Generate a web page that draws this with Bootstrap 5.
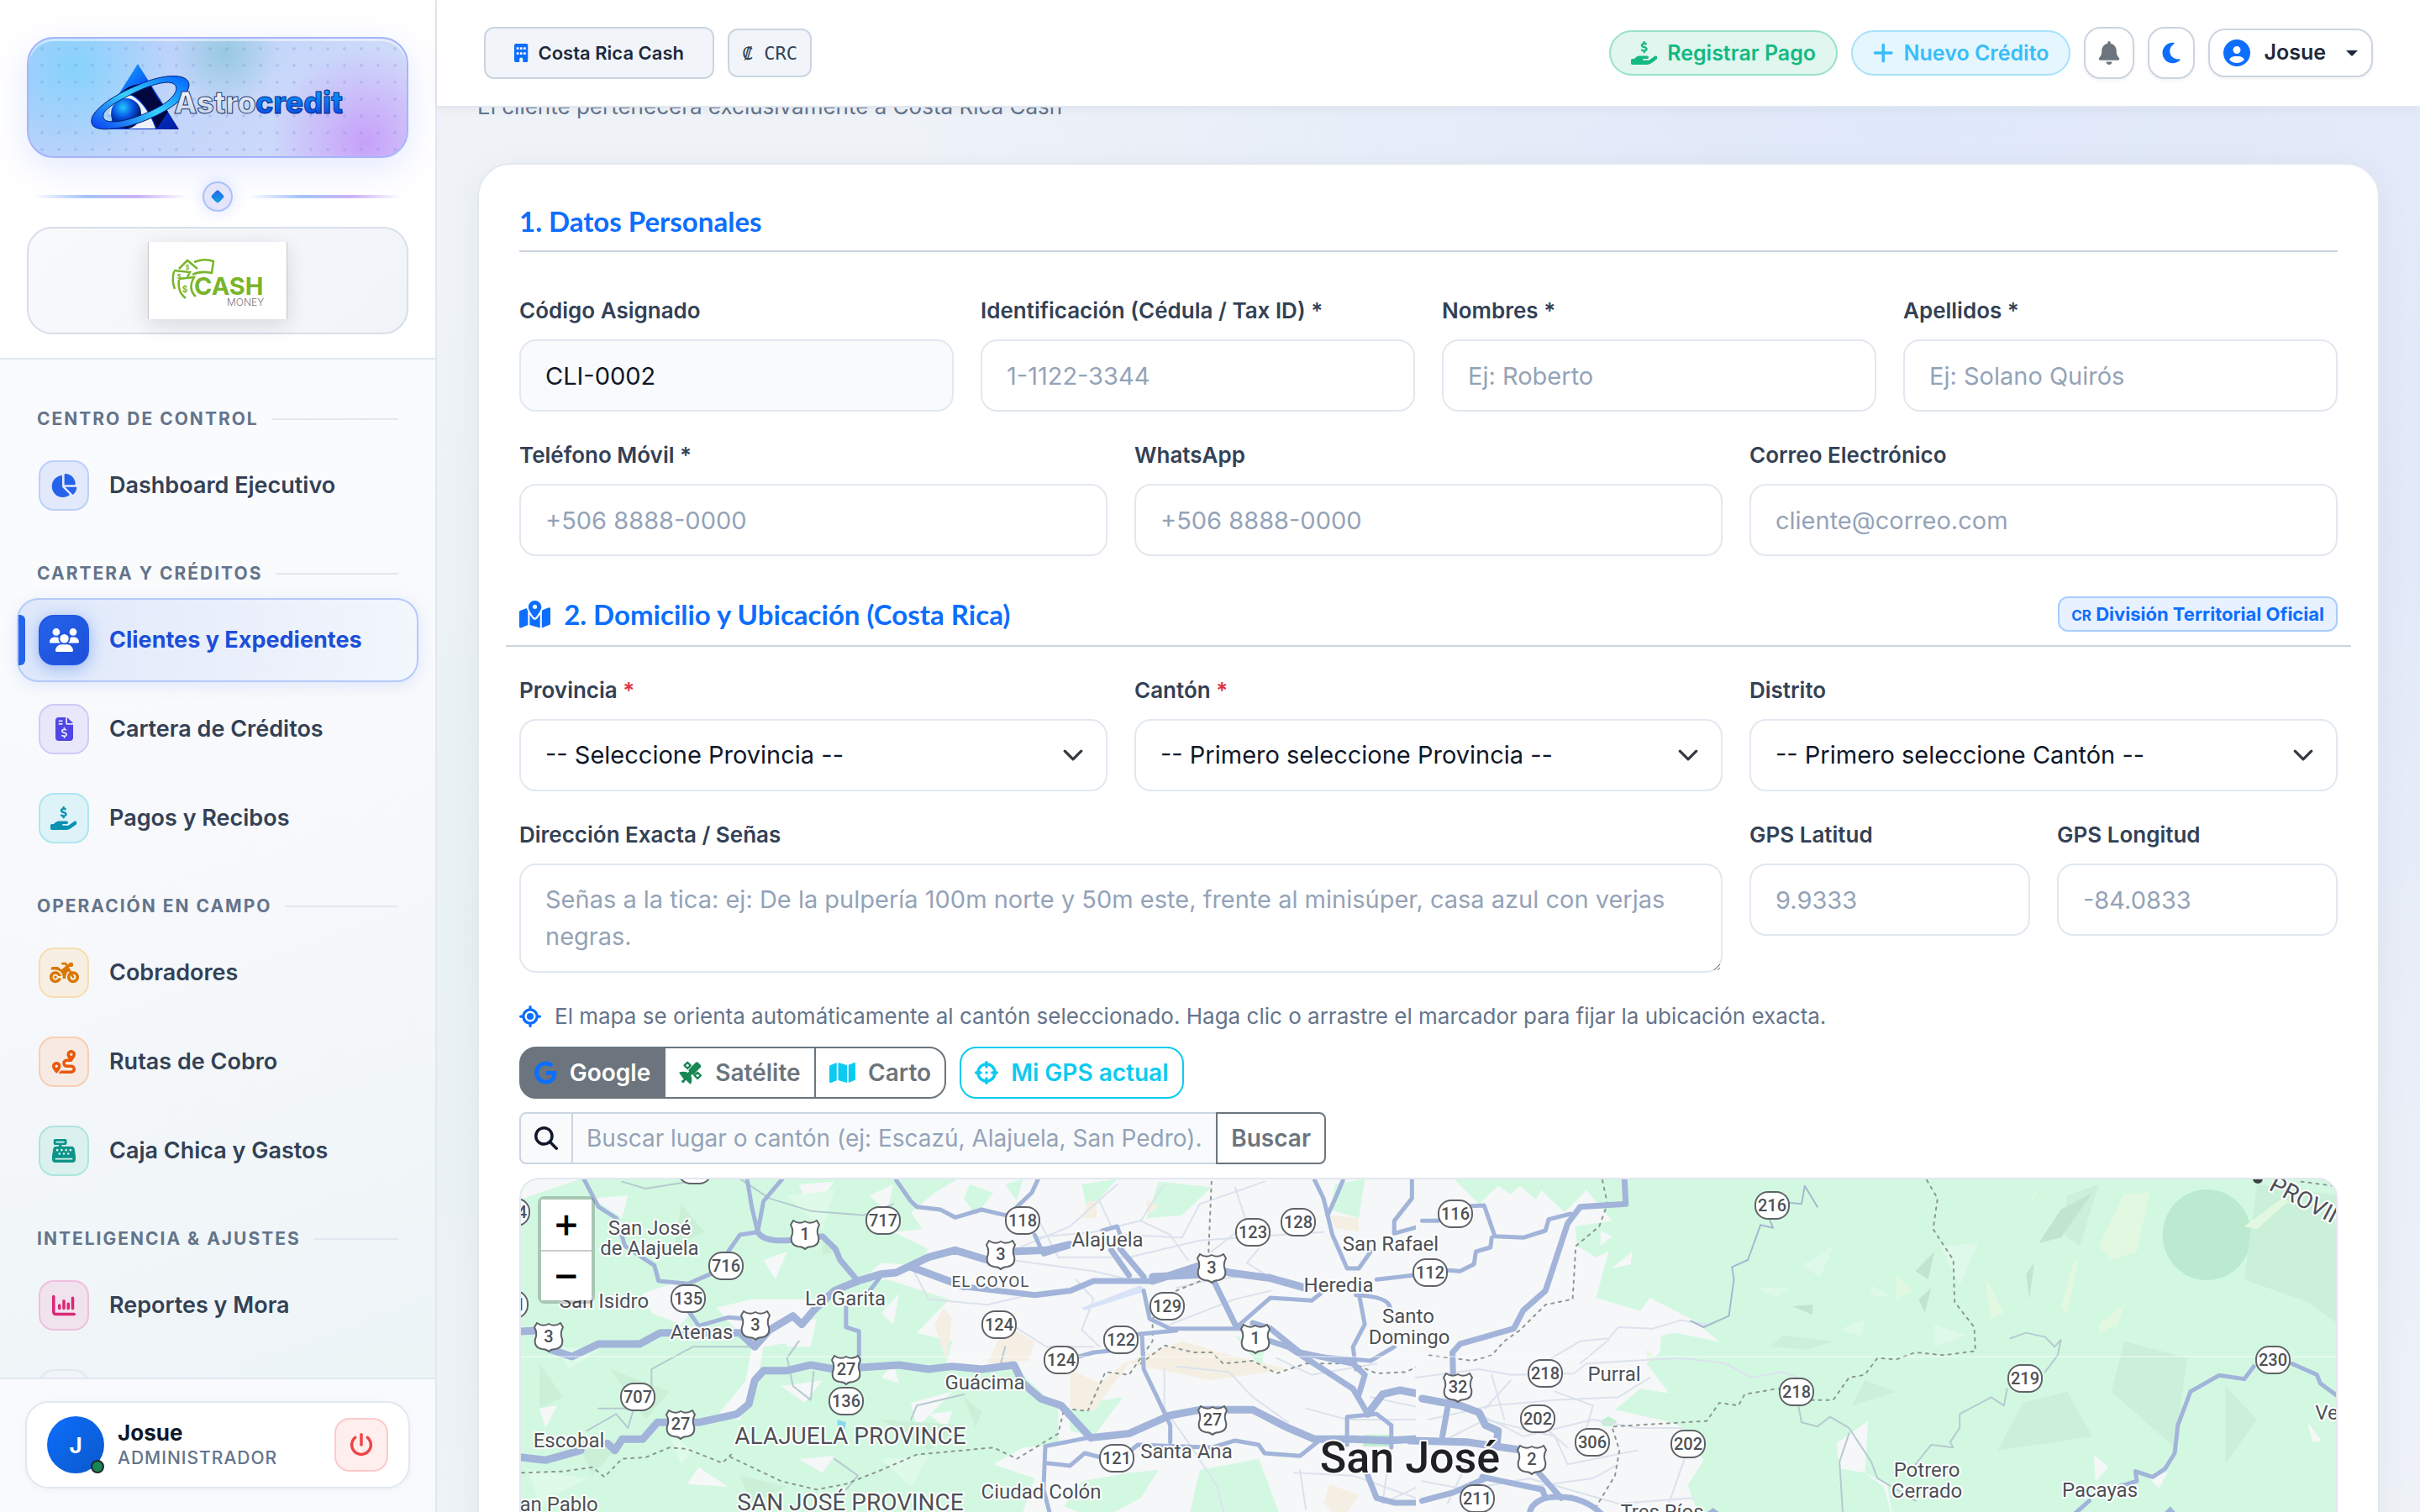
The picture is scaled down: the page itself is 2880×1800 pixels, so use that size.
<!DOCTYPE html>
<html lang="es">
<head>
<meta charset="utf-8">
<meta name="viewport" content="width=device-width, initial-scale=1">
<title>Astrocredit – Nuevo Cliente</title>
<link rel="stylesheet" href="https://cdn.jsdelivr.net/npm/bootstrap@5.3.0/dist/css/bootstrap.min.css">
<style>
:root{--ui:Inter,"Liberation Sans",sans-serif;--line:#e2e8f0;--line-strong:#cbd5e1;--ink:#0f172a;--slate:#334155;--muted:#64748b}
html{font-size:32px}
body{--bs-border-width:2px;font-family:var(--ui);color:var(--ink);background:
 radial-gradient(circle at 78% 0,rgba(219,229,250,.8),transparent 42%),
 radial-gradient(circle at 18% 62%,rgba(228,240,240,.6),transparent 30%),
 radial-gradient(circle at 100% 35%,rgba(226,233,248,.9),transparent 40%),#eff3f8}
.ico{width:1em;height:1em;fill:currentColor;flex:none}
.ico-wide{width:auto;height:1em;fill:currentColor;flex:none;vertical-align:-4px}
/* sidebar */
.side{width:520px;flex:none;border-right:2px solid var(--line);background:linear-gradient(160deg,#f6f9fe 0,#fafbfd 35%,#f6f8fb 60%,#eaf3f5 100%)}
.side-head{padding:44px 32px 28px;background:#fff;border-bottom:2px solid var(--line)}
.brand-box{height:144px;border:2px solid #a5b4fc;border-radius:32px;overflow:hidden;box-shadow:0 12px 40px rgba(99,130,255,.18),inset 0 3px 0 rgba(255,255,255,.5);background:
 radial-gradient(circle,rgba(99,130,220,.22) 2px,transparent 2px) 6px 2px/20px 20px,
 radial-gradient(circle at 12% 25%,rgba(125,211,252,.85),transparent 28%),
 radial-gradient(circle at 52% 12%,rgba(134,196,214,.7),transparent 24%),
 radial-gradient(circle at 89% 88%,rgba(196,150,250,.85),transparent 27%),
 linear-gradient(135deg,#b4cdfb,#c4d6fa 50%,#d8def9)}
.split-row{padding:28px 8px 18px}
.split-line{height:4px;background:linear-gradient(90deg,transparent,#a5c4fb 34%,#ccb3f9 68%,transparent)}
.split-dot{width:36px;height:36px;border:2px solid #a9c2fb;border-radius:50%;background:#e4e4fb;box-shadow:0 0 18px rgba(99,130,255,.25);margin:0 18px}
.split-dot i{width:12px;height:12px;border-radius:3px;transform:rotate(45deg);background:linear-gradient(135deg,#2563eb,#12a5dc)}
.client-box{height:128px;border:2px solid #d8dfe9;border-radius:30px;background:linear-gradient(135deg,#f8f9fc,#f0f4f8)}
.client-logo{width:166px;height:92px;background:#fff;border:solid #c6c6c6;border-width:0 1px;box-shadow:0 6px 24px rgba(15,23,42,.13)}
.client-logo svg{display:block}
.side-nav{overflow:hidden;padding:16px 20px 0}
.nav-cap{padding:42px 24px 16px;line-height:26px;font-size:21px;font-weight:700;letter-spacing:2px;color:var(--muted)}
.nav-cap::after{content:"";flex:1;height:2px;margin-left:16px;background:var(--line)}
.nav-item-x{position:relative;height:100px;margin-bottom:6px;padding:0 24px;gap:24px;border:2px solid transparent;border-radius:26px;color:var(--slate);font-size:27px;font-weight:600;text-decoration:none}
.nav-item-x:has(+.nav-cap){margin-bottom:0}
.tile{width:60px;height:60px;flex:none;border:2px solid;border-radius:18px;font-size:28px}
.t-blue{color:#2563eb;background:#e2e9fb;border-color:#bcd0fb}
.t-violet{color:#4f46e5;background:#e9e8fb;border-color:#cfcbf9}
.t-cyan{color:#0891b2;background:#def3f8;border-color:#aee6f0}
.t-amber{color:#d97706;background:#f7efe1;border-color:#f6deb0}
.t-orange{color:#ea580c;background:#f6eae3;border-color:#f8cfb4}
.t-teal{color:#0d9488;background:#daf1ef;border-color:#ace5de}
.t-pink{color:#db2777;background:#f0e3ee;border-color:#f0bfdd}
.t-gray{color:var(--muted);background:#f0f4f9;border-color:var(--line)}
.nav-item-x.is-on{color:#1d4ed8;font-weight:700;border-color:#b4cafb;background:linear-gradient(90deg,#dfe9fb,#e8eefb 45%,#f2f7fc);box-shadow:0 4px 18px rgba(37,99,235,.12)}
.nav-item-x.is-on::before{content:"";position:absolute;left:0;top:18px;width:8px;height:60px;border-radius:0 6px 6px 0;background:#2563eb}
.is-on .tile{color:#fff;border-color:#2258e2;background:linear-gradient(135deg,#2563eb,#1d4ed8);box-shadow:0 4px 20px rgba(37,99,235,.4)}
.side-foot{height:160px;flex:none;padding:26px 30px;border-top:2px solid var(--line);background:#f8fafd}
.user-box{height:104px;padding:0 24px;border:2px solid var(--line);border-radius:28px;background:#fff;box-shadow:0 2px 8px rgba(15,23,42,.04)}
.avatar-x{position:relative;width:68px;height:68px;border-radius:50%;background:linear-gradient(135deg,#0d6efd,#0a58ca);color:#fff;font-size:26px;font-weight:700}
.avatar-x::after{content:"";position:absolute;right:0;bottom:0;width:16px;height:16px;border:2px solid #212529;border-radius:50%;background:#198754}
.user-name{font-size:26px;line-height:32px;font-weight:700}
.user-role{font-size:21px;line-height:28px;font-weight:500;letter-spacing:1px;color:var(--muted)}
.power{width:64px;height:64px;padding:0;border:2px solid #fbcaca;border-radius:18px;background:#feeeee;color:#ef4444;font-size:28px}
/* top bar */
.page-col{min-width:0}
.topbar{position:relative;z-index:5;height:128px;flex:none;padding:0 56px;border-bottom:2px solid var(--line);background:#fff;box-shadow:0 2px 12px rgba(15,23,42,.05)}
.chip{border:2px solid var(--line-strong);border-radius:12px;background:#f1f5f9;color:var(--slate);font-size:22px;font-weight:600;padding:0}
.chip-co{width:274px;height:62px;gap:12px;color:#1e293b}
.chip-cu{width:100px;height:58px;font:500 22px "DejaVu Sans Mono","Liberation Mono",monospace}
.pill{height:54px;padding:0 24px;gap:12px;border:2px solid;border-radius:27px;font-size:25px;font-weight:600;line-height:50px}
.pill svg{font-size:28px}
.pill-ok{color:#14b981;background:#e0f6ef;border-color:#97e1c6}
.pill-new{color:#38bdf8;background:#e5f6fe;border-color:#a8e1fb}
.sq{height:62px;width:60px;padding:0;border:2px solid var(--line-strong);border-radius:20px;background:#fff;color:#6c757d;font-size:28px;box-shadow:0 2px 4px rgba(15,23,42,.05)}
.sq-moon{width:56px;color:#0d6efd}
.me{height:58px;padding:0 16px;border:2px solid var(--line-strong);border-radius:20px;background:#fff;color:#1e293b;font-size:25px;font-weight:600;box-shadow:0 2px 4px rgba(15,23,42,.05)}
.me .ico{color:#0d6efd;font-size:32px}
.me::after{margin-left:24px}
/* form */
.page{flex:1;min-height:0;overflow:hidden;padding:0 48px}
.lead-in{margin:-21px 0 48px;font-size:26px;line-height:39px;color:var(--muted)}
.sheet{border:2px solid var(--line);border-radius:40px;background:#fff;padding:48px;box-shadow:0 8px 40px rgba(15,23,42,.05)}
.h-sec{font-family:Lato,Inter,sans-serif;font-size:33px;line-height:38px;font-weight:700;color:#0d6efd}
.h-first{margin:0 0 50px;padding-bottom:16px;border-bottom:2px solid var(--line-strong)}
.row>.h-bar{--bs-gutter-y:48px;padding-bottom:16px;border-bottom:2px solid var(--line-strong)}
.tag-x{height:42px;padding:0 14px;border:2px solid #a9cdfe;border-radius:12px;background:#e7f1ff;color:#0d6efd;font-size:22px;font-weight:700;line-height:38px}
.tag-x span{font-size:17px}
.form-label{display:block;margin-bottom:15px;font-size:26px;line-height:39px;font-weight:600;color:var(--slate)}
.fld{display:block;height:86px;padding:19px 29px;border:2px solid var(--line);border-radius:20px;font-size:29px;line-height:44px;color:var(--ink);background-color:#fff}
.fld::placeholder,.find::placeholder{color:#94a3b8;opacity:1}
.fld[readonly]{background-color:#f8fafc}
textarea.fld{height:130px;overflow:hidden}
.form-select.fld{padding-top:0;padding-bottom:0;background-position:right 26px center;background-size:26px 26px}
.hint{font-size:26px;line-height:40px;color:var(--muted);margin-bottom:16px}
.hint svg{margin-right:16px}
.btn-sm,.search-x .btn{font-weight:600}
.map-set .btn{border-width:2px;border-radius:20px}
.map-set .btn-group .btn:not(:last-child){border-top-right-radius:0;border-bottom-right-radius:0}
.map-set .btn-group .btn:not(:first-child){border-top-left-radius:0;border-bottom-left-radius:0}
.search-x{max-width:960px}
.search-x .input-group-text{border:2px solid var(--line-strong);background:#f8fafc;color:var(--ink)}
.find{border:2px solid var(--line-strong);background:#f8fafc;height:62px}
.map-x{position:relative;height:720px;border:2px solid var(--line);border-radius:24px;overflow:hidden;background:#d3f8e2}
.map-x>svg{display:block;width:100%}
.zoomer{position:absolute;left:20px;top:20px;border:4px solid rgba(0,0,0,.2);border-radius:8px;background-clip:padding-box}
.zoomer button{display:block;width:60px;height:60px;border:0;background:#fff;color:#000;font:400 46px/54px "Liberation Sans",sans-serif;-webkit-text-stroke:1px #000;padding:0}
.zoomer button+button{border-top:2px solid #ccc}
.rd{fill:none;stroke:#a2b4d9;stroke-linejoin:round;stroke-linecap:round}
.rd path{vector-effect:non-scaling-stroke}
.w8{stroke-width:9}.w6{stroke-width:7}.w5{stroke-width:5}
.thin{stroke:#dbe2ee;stroke-width:2}
.gthin{stroke:#b5cbd0;stroke-width:2}
.bdr{stroke:#8d9793;stroke-width:2;stroke-dasharray:3 6}
.lbl{font:24px Roboto,sans-serif;fill:#4d5156;text-anchor:middle;paint-order:stroke;stroke:#fff;stroke-width:4px;stroke-linejoin:round}
.num{font:500 20px Roboto,sans-serif;fill:#4d5156;text-anchor:middle}
.prov{font-size:28px}
</style>
</head>
<body class="vh-100 overflow-hidden">
<svg width="0" height="0" class="position-absolute" aria-hidden="true">
 <symbol id="i-pie" viewBox="0 0 576 512"><path d="M304 240V16.6c0-9 7-16.6 16-16.6C443.7 0 544 100.3 544 224c0 9-7.6 16-16.6 16H304zM32 272C32 150.7 122.1 50.3 239 34.3c9.2-1.3 17 6.1 17 15.4V288L412.5 444.5c6.7 6.7 6.2 17.7-1.5 23.1C371.8 495.6 323.8 512 272 512C139.5 512 32 404.6 32 272zm526.4 16c9.3 0 16.6 7.8 15.4 17c-7.7 55.9-34.6 105.6-73.9 142.3c-6 5.6-15.4 5.2-21.2-.7L320 288H558.4z"/></symbol>
 <symbol id="i-users" viewBox="0 0 640 512"><path d="M144 0a80 80 0 1 1 0 160A80 80 0 1 1 144 0zM512 0a80 80 0 1 1 0 160A80 80 0 1 1 512 0zM0 298.7C0 239.8 47.8 192 106.7 192h42.7c15.9 0 31 3.5 44.6 9.7c-1.3 7.2-1.9 14.7-1.9 22.3c0 38.2 16.8 72.5 43.3 96H21.3C9.6 320 0 310.4 0 298.7zM405.3 320H404.7c26.6-23.5 43.3-57.8 43.3-96c0-7.6-.7-15-1.9-22.3c13.6-6.3 28.7-9.7 44.6-9.7h42.7C592.2 192 640 239.8 640 298.7c0 11.8-9.6 21.3-21.3 21.3H405.3zM224 224a96 96 0 1 1 192 0 96 96 0 1 1-192 0zM128 485.3C128 411.7 187.7 352 261.3 352H378.7C452.3 352 512 411.7 512 485.3c0 14.7-11.9 26.7-26.7 26.7H154.7c-14.7 0-26.7-11.9-26.7-26.7z"/></symbol>
 <symbol id="i-invoice" viewBox="0 0 384 512"><path fill-rule="evenodd" d="M64 0C28.700 0 0 28.700 0 64V448c0 35.300 28.700 64 64 64H320c35.300 0 64-28.700 64-64V160H256c-17.700 0-32-14.300-32-32V0H64zM256 0V128H384L256 0zM64 80c0-8.800 7.200-16 16-16h64c8.800 0 16 7.200 16 16s-7.200 16-16 16H80c-8.800 0-16-7.200-16-16zm0 64c0-8.800 7.200-16 16-16h64c8.800 0 16 7.200 16 16s-7.200 16-16 16H80c-8.800 0-16-7.200-16-16zm128 72c8.800 0 16 7.200 16 16v17.300c8.500 1.200 16.700 3.100 24.100 5.100c8.500 2.300 13.600 11 11.300 19.600s-11 13.600-19.600 11.300c-11.100-3-22-5.200-32.100-5.300c-8.400-.1-17.400 1.800-23.600 5.500c-5.700 3.400-8.100 7.300-8.100 12.800c0 3.700 1.300 6.500 7.300 10.100c6.900 4.100 16.600 7.100 29.200 10.900l.5 .1c11.300 3.400 25.300 7.600 36.300 14.600c12.100 7.600 22.400 19.700 22.700 38.200c.3 19.300-9.600 33.300-22.900 41.600c-7.700 4.800-16.400 7.600-25.100 9.100V440c0 8.800-7.200 16-16 16s-16-7.200-16-16V422.200c-11.200-2.100-21.700-5.700-30.900-8.900c-2.100-.7-4.200-1.400-6.200-2.100c-8.400-2.800-12.900-11.900-10.100-20.200s11.900-12.900 20.200-10.100c2.500 .8 4.800 1.600 7.100 2.400c13.600 4.600 24.600 8.400 36.300 8.700c9.100 .3 17.900-1.700 23.700-5.300c5.100-3.200 7.900-7.300 7.800-14c-.1-4.600-1.800-7.800-7.700-11.600c-6.800-4.300-16.500-7.400-29-11.200l-1.600-.5c-11-3.300-24.300-7.300-34.800-13.700c-12-7.200-22.600-18.900-22.700-37.300c-.1-19.400 10.800-32.800 23.800-40.500c7.500-4.400 15.800-7.200 24.100-8.700V232c0-8.800 7.200-16 16-16z"/></symbol>
 <symbol id="i-hand" viewBox="0 0 576 512"><path d="M559.7 392.200c17.800-13.100 21.600-38.100 8.500-55.900s-38.100-21.600-55.900-8.500L392.600 416H272c-8.800 0-16-7.200-16-16s7.200-16 16-16h80c17.700 0 32-14.300 32-32s-14.300-32-32-32H193.700c-29.100 0-57.300 9.900-80 28L68.800 384H32c-17.700 0-32 14.300-32 32v64c0 17.700 14.300 32 32 32H352.500c29 0 57.300-9.300 80.700-26.500l126.600-93.300z"/><path transform="translate(86 -232) scale(1.050 1.080)" stroke="currentColor" stroke-width="10" d="M192 216c8.800 0 16 7.200 16 16v17.300c8.500 1.200 16.700 3.100 24.100 5.100c8.500 2.300 13.600 11 11.300 19.600s-11 13.600-19.600 11.300c-11.100-3-22-5.200-32.100-5.300c-8.400-.1-17.400 1.800-23.600 5.500c-5.700 3.400-8.100 7.300-8.100 12.800c0 3.700 1.300 6.500 7.300 10.100c6.900 4.100 16.600 7.100 29.200 10.900l.5 .1c11.300 3.400 25.300 7.600 36.300 14.600c12.100 7.600 22.400 19.700 22.700 38.200c.3 19.300-9.600 33.300-22.900 41.600c-7.700 4.800-16.400 7.600-25.100 9.100V440c0 8.800-7.200 16-16 16s-16-7.200-16-16V422.200c-11.200-2.100-21.700-5.700-30.900-8.900c-2.100-.7-4.200-1.400-6.200-2.100c-8.400-2.800-12.900-11.900-10.100-20.200s11.900-12.900 20.200-10.100c2.500 .8 4.800 1.600 7.100 2.400c13.600 4.600 24.600 8.400 36.300 8.700c9.100 .3 17.900-1.700 23.700-5.300c5.100-3.200 7.900-7.300 7.800-14c-.1-4.600-1.800-7.800-7.700-11.600c-6.800-4.300-16.500-7.400-29-11.200l-1.600-.5c-11-3.300-24.300-7.300-34.800-13.700c-12-7.200-22.600-18.900-22.700-37.300c-.1-19.400 10.800-32.800 23.800-40.500c7.500-4.400 15.800-7.200 24.100-8.700V232c0-8.800 7.200-16 16-16z"/></symbol>
 <symbol id="i-moto" viewBox="0 0 640 512"><path d="M280 32c-13.3 0-24 10.7-24 24s10.7 24 24 24h57.7l16.4 30.3L256 192l-45.3-45.3c-12-12-28.3-18.7-45.3-18.700H64c-17.700 0-32 14.300-32 32v32h96c88.400 0 160 71.600 160 160c0 11-1.100 21.700-3.200 32h70.400c-2.100-10.300-3.200-21-3.200-32c0-52.200 25-98.600 63.700-127.800l15.400 28.600C402.400 276.300 384 312 384 352c0 70.700 57.300 128 128 128s128-57.300 128-128s-57.300-128-128-128c-13.500 0-26.500 2.100-38.700 6L418.200 128H480c17.700 0 32-14.300 32-32V64c0-17.700-14.300-32-32-32H459.600c-7.500 0-14.700 2.600-20.500 7.400L391.700 78.900l-14-26c-7-12.900-20.500-21-35.200-21H280zM462.700 311.200l28.200 52.200c6.300 11.700 20.900 16 32.500 9.700s16-20.900 9.700-32.500l-28.200-52.200c2.300-.3 4.700-.4 7.100-.4c35.300 0 64 28.700 64 64s-28.700 64-64 64s-64-28.700-64-64c0-15.500 5.500-29.700 14.700-40.800zM187.300 376c-9.500 23.500-32.500 40-59.300 40c-35.300 0-64-28.700-64-64s28.700-64 64-64c26.900 0 49.900 16.500 59.300 40h66.400C242.500 268.800 190.500 224 128 224C57.300 224 0 281.300 0 352s57.300 128 128 128c62.500 0 114.500-44.800 125.800-104H187.300zM128 384a32 32 0 1 0 0-64 32 32 0 1 0 0 64z"/></symbol>
 <symbol id="i-route" viewBox="0 0 512 512"><path d="M512 96c0 50.2-59.1 125.1-84.6 155c-3.8 4.4-9.4 6.1-14.5 5H320c-17.7 0-32 14.3-32 32s14.3 32 32 32h96c53 0 96 43 96 96s-43 96-96 96H139.6c8.7-9.9 19.3-22.6 30-36.8c6.3-8.4 12.8-17.6 19-27.2H416c17.7 0 32-14.3 32-32s-14.3-32-32-32H320c-53 0-96-43-96-96s43-96 96-96h39.8c-21-31.5-39.8-67.7-39.8-96c0-53 43-96 96-96s96 43 96 96zM117.1 489.1c-3.800 4.300-7.200 8.100-10.100 11.300l-1.800 2-.2-.2c-6 4.600-14.600 4-20-1.800C59.800 473 0 402.5 0 352c0-53 43-96 96-96s96 43 96 96c0 30-21.1 67-43.5 97.900c-10.700 14.700-21.700 28-30.800 38.500l-.6 .7zM128 352a32 32 0 1 0-64 0 32 32 0 1 0 64 0zM416 128a32 32 0 1 0 0-64 32 32 0 1 0 0 64z"/></symbol>
 <symbol id="i-cash" viewBox="0 0 512 512"><path d="M64 0C46.3 0 32 14.3 32 32V96c0 17.7 14.3 32 32 32h80v32H87c-31.6 0-58.5 23.1-63.3 54.4L1.1 364.1C.4 368.8 0 373.6 0 378.4V448c0 35.3 28.7 64 64 64H448c35.3 0 64-28.7 64-64V378.4c0-4.8-.4-9.6-1.1-14.4L488.2 214.4C483.5 183.1 456.6 160 425 160H208V128h80c17.7 0 32-14.3 32-32V32c0-17.7-14.3-32-32-32H64zM96 48H256c8.8 0 16 7.2 16 16s-7.2 16-16 16H96c-8.8 0-16-7.2-16-16s7.2-16 16-16zM64 432c0-8.8 7.2-16 16-16H432c8.8 0 16 7.2 16 16s-7.2 16-16 16H80c-8.8 0-16-7.2-16-16zm48-168a24 24 0 1 1 0-48 24 24 0 1 1 0 48zm120-24a24 24 0 1 1 -48 0 24 24 0 1 1 48 0zM160 344a24 24 0 1 1 0-48 24 24 0 1 1 0 48zM328 240a24 24 0 1 1 -48 0 24 24 0 1 1 48 0zM256 344a24 24 0 1 1 0-48 24 24 0 1 1 0 48zM424 240a24 24 0 1 1 -48 0 24 24 0 1 1 48 0zM352 344a24 24 0 1 1 0-48 24 24 0 1 1 0 48z"/></symbol>
 <symbol id="i-chart" viewBox="0 0 512 512"><path d="M32 32c17.7 0 32 14.3 32 32V400c0 8.8 7.2 16 16 16H480c17.7 0 32 14.3 32 32s-14.3 32-32 32H80c-44.2 0-80-35.8-80-80V64C0 46.3 14.3 32 32 32zM160 224c17.7 0 32 14.3 32 32v64c0 17.7-14.3 32-32 32s-32-14.3-32-32V256c0-17.7 14.3-32 32-32zm128-64V320c0 17.7-14.3 32-32 32s-32-14.3-32-32V160c0-17.7 14.3-32 32-32s32 14.3 32 32zm64 32c17.7 0 32 14.3 32 32v96c0 17.7-14.3 32-32 32s-32-14.3-32-32V224c0-17.7 14.3-32 32-32zM480 96V320c0 17.7-14.3 32-32 32s-32-14.3-32-32V96c0-17.7 14.3-32 32-32s32 14.3 32 32z"/></symbol>
 <symbol id="i-power" viewBox="0 0 512 512"><path d="M288 32c0-17.7-14.3-32-32-32s-32 14.3-32 32V256c0 17.7 14.3 32 32 32s32-14.3 32-32V32zM143.5 120.6c13.6-11.3 15.4-31.5 4.1-45.1s-31.5-15.4-45.1-4.1C49.7 115.4 16 181.8 16 256c0 132.5 107.5 240 240 240s240-107.5 240-240c0-74.2-33.8-140.6-86.6-184.6c-13.6-11.3-33.8-9.4-45.1 4.1s-9.4 33.8 4.1 45.1c38.9 32.3 63.5 81 63.5 135.4c0 97.2-78.8 176-176 176s-176-78.8-176-176c0-54.4 24.7-103.1 63.5-135.4z"/></symbol>
 <symbol id="i-building" viewBox="0 0 384 512"><path fill-rule="evenodd" d="M48 0C21.500 0 0 21.500 0 48V464c0 26.500 21.500 48 48 48h96V432c0-26.500 21.500-48 48-48s48 21.500 48 48v80h96c26.500 0 48-21.500 48-48V48c0-26.500-21.500-48-48-48H48zM64 240h64v64H64zM160 240h64v64H160zM256 240h64v64H256zM64 96h64v64H64zM160 96h64v64H160zM256 96h64v64H256z"/></symbol>
 <symbol id="i-bell" viewBox="0 0 448 512"><path d="M224 0c-17.7 0-32 14.3-32 32V51.2C119 66 64 130.6 64 208v18.8c0 47-17.3 92.4-48.5 127.6l-7.4 8.3c-8.4 9.4-10.4 22.9-5.3 34.4S19.4 416 32 416H416c12.6 0 24-7.4 29.2-18.9s3.1-25-5.3-34.4l-7.4-8.3C401.3 319.2 384 273.9 384 226.8V208c0-77.4-55-142-128-156.8V32c0-17.7-14.3-32-32-32zm45.3 493.3c12-12 18.7-28.3 18.7-45.3H160c0 17 6.7 33.300 18.7 45.300s28.300 18.700 45.300 18.700s33.300-6.700 45.300-18.700z"/></symbol>
 <symbol id="i-moon" viewBox="0 0 384 512"><path d="M223.5 32C100 32 0 132.3 0 256S100 480 223.5 480c60.6 0 115.5-24.2 155.8-63.4c5-4.9 6.3-12.5 3.1-18.7s-10.1-9.7-17-8.5c-9.8 1.7-19.8 2.6-30.1 2.6c-96.900 0-175.500-78.800-175.500-176c0-65.800 36-123.100 89.300-153.300c6.100-3.500 9.200-10.500 7.700-17.300s-7.300-11.900-14.300-12.500c-6.300-.5-12.600-.8-19-.8z"/></symbol>
 <symbol id="i-me" viewBox="0 0 512 512"><path d="M399 384.2C376.9 345.8 335.4 320 288 320H224c-47.4 0-88.9 25.8-111 64.2c35.2 39.2 86.2 63.8 143 63.8s107.8-24.7 143-63.8zM0 256a256 256 0 1 1 512 0A256 256 0 1 1 0 256zm256 16a72 72 0 1 0 0-144 72 72 0 1 0 0 144z"/></symbol>
 <symbol id="i-plus" viewBox="0 0 448 512"><path d="M256 80c0-17.700-14.300-32-32-32s-32 14.300-32 32V224H48c-17.700 0-32 14.300-32 32s14.300 32 32 32H192V432c0 17.700 14.300 32 32 32s32-14.300 32-32V288H400c17.700 0 32-14.300 32-32s-14.300-32-32-32H256V80z"/></symbol>
 <symbol id="i-mapdot" viewBox="0 0 576 512"><path d="M408 120c0 54.6-73.1 151.900-105.200 192c-7.700 9.600-22 9.600-29.600 0C241.100 271.900 168 174.600 168 120C168 53.700 221.700 0 288 0s120 53.700 120 120zm8 80.400c3.500-6.900 6.700-13.800 9.600-20.600c.5-1.200 1-2.500 1.500-3.700l116-46.400C558.900 123.400 576 135 576 152V422.800c0 9.800-6 18.600-15.100 22.300L416 503V200.400zM137.600 138.300c2.400 14.100 7.200 28.300 12.800 41.500c2.900 6.800 6.100 13.700 9.600 20.600V451.800L32.900 502.700C17.100 509 0 497.400 0 480.400V209.600c0-9.800 6-18.600 15.100-22.300l122.600-49zM327.800 332c13.900-17.400 35.700-45.700 56.200-77V504.300L192 449.400V255c20.500 31.300 42.300 59.600 56.200 77c20.500 25.600 59.100 25.600 79.600 0zM288 152a40 40 0 1 0 0-80 40 40 0 1 0 0 80z"/></symbol>
 <symbol id="i-loc" viewBox="0 0 512 512"><path d="M256 0c17.700 0 32 14.300 32 32V66.700C368.400 80.100 431.900 143.600 445.300 224H480c17.700 0 32 14.300 32 32s-14.300 32-32 32H445.300C431.900 368.400 368.400 431.900 288 445.300V480c0 17.700-14.300 32-32 32s-32-14.300-32-32V445.300C143.600 431.900 80.100 368.400 66.700 288H32c-17.700 0-32-14.300-32-32s14.300-32 32-32H66.700C80.100 143.600 143.600 80.100 224 66.700V32c0-17.700 14.300-32 32-32zM128 256a128 128 0 1 0 256 0 128 128 0 1 0-256 0zm128-80a80 80 0 1 1 0 160 80 80 0 1 1 0-160z"/></symbol>
 <symbol id="i-cross" viewBox="0 0 512 512"><path d="M256 0c17.700 0 32 14.300 32 32V42.400c93.700 13.900 167.700 88 181.600 181.600H480c17.700 0 32 14.300 32 32s-14.300 32-32 32H469.600c-13.900 93.700-88 167.700-181.600 181.600V480c0 17.700-14.300 32-32 32s-32-14.300-32-32V469.600C130.300 455.700 56.300 381.700 42.400 288H32c-17.700 0-32-14.300-32-32s14.300-32 32-32H42.400C56.300 130.300 130.300 56.300 224 42.400V32c0-17.700 14.300-32 32-32zM107.400 288c12.500 58.300 58.400 104.100 116.600 116.600V384c0-17.700 14.300-32 32-32s32 14.300 32 32v20.600c58.300-12.500 104.100-58.400 116.600-116.600H384c-17.700 0-32-14.300-32-32s14.300-32 32-32h20.600C392.100 165.700 346.300 119.900 288 107.400V128c0 17.700-14.300 32-32 32s-32-14.300-32-32V107.400C165.700 119.900 119.900 165.700 107.400 224H128c17.700 0 32 14.300 32 32s-14.300 32-32 32H107.400zM256 224a32 32 0 1 1 0 64 32 32 0 1 1 0-64z"/></symbol>
 <symbol id="i-g" viewBox="0 0 488 512"><path d="M488 261.8C488 403.3 391.100 504 248 504 110.800 504 0 393.200 0 256S110.800 8 248 8c66.800 0 123 24.500 166.300 64.900l-67.500 64.900C258.500 52.600 94.300 116.600 94.300 256c0 86.500 69.100 156.600 153.700 156.600 98.200 0 135-70.400 140.800-106.900H248v-85.300h236.100c2.300 12.700 3.900 24.900 3.900 41.400z"/></symbol>
 <symbol id="i-sat" viewBox="0 0 512 512"><path d="M120 98 L186 32 L252 98 L186 164z M340 318 L406 252 L472 318 L406 384z" fill="none" stroke="currentColor" stroke-width="42" stroke-linejoin="round"/><path d="M262 138 L366 30 Q390 12 414 30 L474 92 Q490 116 474 136 L370 240 L370 250 L315 310 L290 290 L262 318 Q300 400 262 500 Q250 512 236 500 L152 416 L124 444 Q120 480 88 480 Q54 474 56 442 Q62 416 92 412 L104 398 L12 268 Q2 252 18 244 Q110 216 196 254 L222 226 L204 200 L258 140z"/></symbol>
 <symbol id="i-map" viewBox="0 0 576 512"><path d="M384 476.1L192 421.200V35.900L384 90.800V476.100zm32-1.200V88.400L543.100 37.500c15.800-6.300 32.900 5.300 32.900 22.300V394.600c0 9.800-6 18.600-15.100 22.300L416 474.800zM15.100 95.100L160 37.200V423.600L32.900 474.500C17.100 480.800 0 469.200 0 452.200V117.400c0-9.800 6-18.600 15.100-22.300z"/></symbol>
 <symbol id="i-find" viewBox="0 0 512 512"><path d="M416 208c0 45.900-14.900 88.300-40 122.700L502.600 457.400c12.500 12.500 12.500 32.800 0 45.300s-32.800 12.500-45.300 0L330.700 376c-34.400 25.200-76.800 40-122.700 40C93.100 416 0 322.900 0 208S93.100 0 208 0S416 93.100 416 208zM208 352a144 144 0 1 0 0-288 144 144 0 1 0 0 288z"/></symbol>
 <symbol id="us" viewBox="-18 -18 36 36"><path d="M-14 -17 Q-7 -12 0 -16 Q7 -12 14 -17 L17 -12 Q13 -5 16 2 Q18 12 8 14 Q3 14 0 17 Q-3 14 -8 14 Q-18 12 -16 2 Q-13 -5 -17 -12z" fill="#fff" stroke="#5f6368" stroke-width="2"/></symbol>
</svg>

<div class="d-flex h-100">
 <aside class="side d-flex flex-column">
  <div class="side-head">
   <div class="brand-box d-flex align-items-center justify-content-center">
    <svg width="304" height="84" viewBox="0 0 304 84" role="img" aria-label="Astrocredit">
     <defs>
      <linearGradient id="lb" x1="0" y1="0" x2="1" y2="1"><stop offset="0" stop-color="#19c3ff"/><stop offset=".45" stop-color="#0749f5"/><stop offset="1" stop-color="#001a9c"/></linearGradient>
      <linearGradient id="lr" x1="0" y1="1" x2="1" y2="0"><stop offset="0" stop-color="#0a3cf0"/><stop offset=".5" stop-color="#38d1ff"/><stop offset="1" stop-color="#0060ff"/></linearGradient>
      <linearGradient id="lc" x1="0" y1="0" x2="0" y2="1"><stop offset="0" stop-color="#08b4ff"/><stop offset="1" stop-color="#0a35e0"/></linearGradient>
      <linearGradient id="ls" x1="0" y1="0" x2="0" y2="1"><stop offset="0" stop-color="#fff"/><stop offset="1" stop-color="#b9cae4"/></linearGradient>
      <radialGradient id="lo" cx=".4" cy=".3" r=".7"><stop offset="0" stop-color="#22c8ff"/><stop offset=".5" stop-color="#064fe0"/><stop offset="1" stop-color="#00093c"/></radialGradient>
     </defs>
     <g transform="translate(-4 -1)">
     <path d="M61 3 L110 81 H28 L34 46z" fill="url(#lb)"/>
     <path d="M30 52 Q46 22 76 28 Q82 42 97 60 L84 80 Q72 52 58 42 Q40 34 30 55z" fill="#02083f"/>
     <path d="M27 62 Q34 36 54 41 Q72 52 82 80 H50z" fill="#eef2f9"/>
     <circle cx="47" cy="62" r="18" fill="url(#lo)"/>
     <path fill-rule="evenodd" d="M8 77 C-4 62 36 38 62 28 C92 14 122 14 122 28 C121 48 78 70 50 77 C32 81 14 83 8 77z M22 70 C34 77 70 64 90 52 C106 42 112 30 102 26 C92 22 66 32 48 42 C28 52 14 62 22 70z" fill="url(#lr)" stroke="#05207c" stroke-width="1"/>
     </g>
     <text x="100" y="61" font-family="Inter,sans-serif" font-size="36" font-weight="800" fill="url(#ls)" stroke="#2b3f73" stroke-width="1">Astro</text>
     <text x="197" y="61" font-family="Inter,sans-serif" font-size="36" font-weight="800" fill="url(#lc)" stroke="#062a8c" stroke-width="1">credit</text>
    </svg>
   </div>
   <div class="split-row d-flex align-items-center"><span class="split-line flex-fill"></span><span class="split-dot d-flex align-items-center justify-content-center"><i></i></span><span class="split-line flex-fill"></span></div>
   <div class="client-box d-flex align-items-center justify-content-center">
    <div class="client-logo">
     <svg width="164" height="92" viewBox="0 0 164 92" role="img" aria-label="Cash Money">
      <g fill="none" stroke="#78b52a" stroke-width="2.500"><path d="M36 32 L46 22 L58 32"/><path d="M54 24 Q66 19 77 23 L75 37 Q62 34 52 39"/><path d="M30 35 Q27 46 31 56"/><path d="M30 34 L49 36 L46 42"/><path d="M36 44 L54 42 Q46 56 56 65"/><path d="M36 45 Q34 60 44 67"/></g>
      <text x="46" y="33" font-family="Inter,sans-serif" font-size="7" font-weight="700" text-anchor="middle" fill="#78b52a">$</text>
      <text x="36" y="44" font-family="Inter,sans-serif" font-size="8" font-weight="700" text-anchor="middle" fill="#78b52a">$</text>
      <text x="43" y="60" font-family="Inter,sans-serif" font-size="10" font-weight="700" text-anchor="middle" fill="#78b52a">$</text>
      <text x="54" y="63" font-family="Inter,sans-serif" font-size="29" font-weight="700" fill="#78b52a">CASH</text>
      <text x="93" y="76" font-family="Inter,sans-serif" font-size="12" font-weight="300" fill="#777">MONEY</text>
     </svg>
    </div>
   </div>
  </div>
  <nav class="side-nav flex-fill">
   <div class="nav-cap d-flex align-items-center">CENTRO DE CONTROL</div>
   <a href="#" class="nav-item-x d-flex align-items-center"><span class="tile t-blue d-flex align-items-center justify-content-center"><svg class="ico-wide" viewBox="0 0 576 512"><use href="#i-pie"/></svg></span>Dashboard Ejecutivo</a>
   <div class="nav-cap d-flex align-items-center">CARTERA Y CRÉDITOS</div>
   <a href="#" class="nav-item-x is-on d-flex align-items-center" aria-current="page"><span class="tile d-flex align-items-center justify-content-center"><svg class="ico-wide" viewBox="0 0 640 512"><use href="#i-users"/></svg></span>Clientes y Expedientes</a>
   <a href="#" class="nav-item-x d-flex align-items-center"><span class="tile t-violet d-flex align-items-center justify-content-center"><svg class="ico-wide" viewBox="0 0 384 512"><use href="#i-invoice"/></svg></span>Cartera de Créditos</a>
   <a href="#" class="nav-item-x d-flex align-items-center"><span class="tile t-cyan d-flex align-items-center justify-content-center"><svg class="ico-wide" viewBox="0 0 576 512"><use href="#i-hand"/></svg></span>Pagos y Recibos</a>
   <div class="nav-cap d-flex align-items-center">OPERACIÓN EN CAMPO</div>
   <a href="#" class="nav-item-x d-flex align-items-center"><span class="tile t-amber d-flex align-items-center justify-content-center"><svg class="ico-wide" viewBox="0 0 640 512"><use href="#i-moto"/></svg></span>Cobradores</a>
   <a href="#" class="nav-item-x d-flex align-items-center"><span class="tile t-orange d-flex align-items-center justify-content-center"><svg class="ico-wide" viewBox="0 0 512 512"><use href="#i-route"/></svg></span>Rutas de Cobro</a>
   <a href="#" class="nav-item-x d-flex align-items-center"><span class="tile t-teal d-flex align-items-center justify-content-center"><svg class="ico-wide" viewBox="0 0 512 512"><use href="#i-cash"/></svg></span>Caja Chica y Gastos</a>
   <div class="nav-cap d-flex align-items-center">INTELIGENCIA &amp; AJUSTES</div>
   <a href="#" class="nav-item-x d-flex align-items-center"><span class="tile t-pink d-flex align-items-center justify-content-center"><svg class="ico-wide" viewBox="0 0 512 512"><use href="#i-chart"/></svg></span>Reportes y Mora</a>
   <a href="#" class="nav-item-x d-flex align-items-center" aria-label="Ajustes"><span class="tile t-gray"></span></a>
  </nav>
  <div class="side-foot">
   <div class="user-box d-flex align-items-center">
    <span class="avatar-x d-flex align-items-center justify-content-center">J</span>
    <div class="ms-2 me-auto"><div class="user-name">Josue</div><div class="user-role">ADMINISTRADOR</div></div>
    <button class="power d-flex align-items-center justify-content-center" type="button" aria-label="Cerrar sesión"><svg class="ico"><use href="#i-power"/></svg></button>
   </div>
  </div>
 </aside>

 <div class="page-col d-flex flex-column flex-fill">
  <header class="topbar d-flex align-items-center gap-2">
   <div class="d-flex align-items-center gap-2 me-auto">
    <button type="button" class="chip chip-co d-flex align-items-center justify-content-center"><svg class="ico-wide text-primary" viewBox="0 0 384 512"><use href="#i-building"/></svg>Costa Rica Cash</button>
    <button type="button" class="chip chip-cu">₡ CRC</button>
   </div>
   <button type="button" class="pill pill-ok d-flex align-items-center"><svg class="ico-wide" viewBox="0 0 576 512"><use href="#i-hand"/></svg>Registrar Pago</button>
   <button type="button" class="pill pill-new d-flex align-items-center"><svg class="ico-wide" viewBox="0 0 448 512"><use href="#i-plus"/></svg>Nuevo Crédito</button>
   <button type="button" class="sq d-flex align-items-center justify-content-center" aria-label="Notificaciones"><svg class="ico"><use href="#i-bell"/></svg></button>
   <button type="button" class="sq sq-moon d-flex align-items-center justify-content-center" aria-label="Tema oscuro"><svg class="ico"><use href="#i-moon"/></svg></button>
   <button type="button" class="me dropdown-toggle d-flex align-items-center"><svg class="ico"><use href="#i-me"/></svg><span class="ms-2">Josue</span></button>
  </header>

  <main class="page">
   <p class="lead-in">El cliente pertenecerá exclusivamente a Costa Rica Cash</p>
   <form class="sheet">
    <h5 class="h-sec h-first">1. Datos Personales</h5>
    <div class="row g-3">
     <div class="col-3"><label class="form-label" for="f1">Código Asignado</label><input id="f1" class="form-control fld" value="CLI-0002" readonly></div>
     <div class="col-3"><label class="form-label" for="f2">Identificación (Cédula / Tax ID) *</label><input id="f2" class="form-control fld" placeholder="1-1122-3344"></div>
     <div class="col-3"><label class="form-label" for="f3">Nombres *</label><input id="f3" class="form-control fld" placeholder="Ej: Roberto"></div>
     <div class="col-3"><label class="form-label" for="f4">Apellidos *</label><input id="f4" class="form-control fld" placeholder="Ej: Solano Quirós"></div>
     <div class="col-4"><label class="form-label" for="f5">Teléfono Móvil *</label><input id="f5" class="form-control fld" placeholder="+506 8888-0000"></div>
     <div class="col-4"><label class="form-label" for="f6">WhatsApp</label><input id="f6" class="form-control fld" placeholder="+506 8888-0000"></div>
     <div class="col-4"><label class="form-label" for="f7">Correo Electrónico</label><input id="f7" type="email" class="form-control fld" placeholder="cliente@correo.com"></div>
     <div class="col-12 h-bar d-flex align-items-center justify-content-between">
      <h5 class="h-sec m-0 d-flex align-items-center"><svg class="ico-wide me-2" viewBox="0 0 576 512"><use href="#i-mapdot"/></svg>2. Domicilio y Ubicación (Costa Rica)</h5>
      <span class="tag-x"><span>CR</span> División Territorial Oficial</span>
     </div>
     <div class="col-4"><label class="form-label" for="f8">Provincia <span class="text-danger">*</span></label><select id="f8" class="form-select fld"><option>-- Seleccione Provincia --</option></select></div>
     <div class="col-4"><label class="form-label" for="f9">Cantón <span class="text-danger">*</span></label><select id="f9" class="form-select fld"><option>-- Primero seleccione Provincia --</option></select></div>
     <div class="col-4"><label class="form-label" for="f10">Distrito</label><select id="f10" class="form-select fld"><option>-- Primero seleccione Cantón --</option></select></div>
     <div class="col-8"><label class="form-label" for="f11">Dirección Exacta / Señas</label><textarea id="f11" class="form-control fld" rows="2" placeholder="Señas a la tica: ej: De la pulpería 100m norte y 50m este, frente al minisúper, casa azul con verjas negras."></textarea></div>
     <div class="col-2"><label class="form-label" for="f12">GPS Latitud</label><input id="f12" class="form-control fld" placeholder="9.9333"></div>
     <div class="col-2"><label class="form-label" for="f13">GPS Longitud</label><input id="f13" class="form-control fld" placeholder="-84.0833"></div>
     <div class="col-12">
      <div class="hint d-flex align-items-center"><svg class="ico text-primary"><use href="#i-loc"/></svg>El mapa se orienta automáticamente al cantón seleccionado. Haga clic o arrastre el marcador para fijar la ubicación exacta.</div>
      <div class="map-set d-flex gap-2 mb-2">
       <div class="btn-group" role="group" aria-label="Tipo de mapa">
        <button type="button" class="btn btn-sm btn-secondary"><svg class="ico-wide me-1 text-primary" viewBox="0 0 488 512"><use href="#i-g"/></svg> Google</button>
        <button type="button" class="btn btn-sm btn-outline-secondary"><svg class="ico-wide me-1 text-success" viewBox="0 0 512 512"><use href="#i-sat"/></svg> Satélite</button>
        <button type="button" class="btn btn-sm btn-outline-secondary"><svg class="ico-wide me-1 text-info" viewBox="0 0 576 512"><use href="#i-map"/></svg> Carto</button>
       </div>
       <button type="button" class="btn btn-sm btn-outline-info"><svg class="ico-wide me-1" viewBox="0 0 512 512"><use href="#i-cross"/></svg> Mi GPS actual</button>
      </div>
      <div class="input-group input-group-sm search-x mb-2">
       <label class="input-group-text" for="f14" aria-label="Buscar"><svg class="ico-wide" viewBox="0 0 512 512"><use href="#i-find"/></svg></label>
       <input id="f14" class="form-control find" placeholder="Buscar lugar o cantón (ej: Escazú, Alajuela, San Pedro).">
       <button type="button" class="btn btn-outline-secondary">Buscar</button>
      </div>
      <div class="map-x">
       <svg viewBox="0 0 2160 716" role="img" aria-label="Mapa de San José y alrededores">
        <rect width="2160" height="716" fill="#d3f8e2"/>
        <!-- urban land, shading and roads of the western half -->
        <g transform="matrix(.7015 0 0 .3333 -20 -14)">
         <g fill="#f6f7f8">
          <path d="M20 40 H130 L60 90 L20 120z M150 110 L210 100 L200 180z M235 450 L290 410 L330 480 L300 560 L250 520z M360 500 L420 470 L530 470 L500 620 L440 640 L430 760 L400 900 L360 890 L410 760 L420 640z M470 560 L530 540 L520 640 L480 640z M440 330 L480 300 L460 400z M690 160 L730 90 L770 40 H1600 V1260 H910 L880 1230 L900 1110 L830 1060 L880 1000 L940 990 L940 860 L905 790 L870 720 L750 700 L760 620 L700 590 L755 470 L650 400 L600 410 L640 340 L700 350 L720 290 L660 230 L710 220z M640 520 L670 450 L660 560z M500 60 L560 50 L520 160z M470 780 L540 760 L510 840z M690 840 L760 800 L700 930z M330 1070 L380 1140 L310 1130z M60 860 L90 850 L70 930z M620 100 L660 60 L650 160z M640 750 L660 700 L670 770z M720 880 L760 870 L750 930z M500 1040 L560 1030 L540 1090z"/>
         </g>
         <g fill="#d3f8e2"><path d="M790 60 L830 90 L800 170 L780 110z M850 60 L880 40 L870 120z M980 60 L1040 40 L990 160z M1110 50 L1200 70 L1150 170 L1090 180z M1410 60 L1460 40 L1450 180 L1400 150z M960 850 L1050 820 L1000 960 L960 940z M1060 1090 L1110 1080 L1080 1180 L1010 1260 L950 1210 L980 1120z M1180 1080 L1280 1040 L1320 1260 H1160z M1240 600 L1290 640 L1285 720 L1260 650z M870 610 h18 l-4 60 h-14z"/><path d="M1460 955 h45 v40 h-48z" fill="#bdebcf"/></g>
         <g fill="#f5efe3"><path d="M745 500 L760 540 L750 690 L730 560z M850 560 L900 620 L890 690 L820 700z M960 720 L1010 770 L1050 700 L1150 620 L1250 680 L1330 720 L1200 760 L1060 700 L1000 870 L960 860z M990 120 h15 v60 h-25z M1090 110 L1110 140 L1090 170z M1400 170 L1450 180 L1450 230 L1410 215z M1400 1130 L1450 1170 L1420 1260 L1390 1200z"/></g>
         <path d="M980 500 L1080 420 L1090 440 L985 510z" fill="#d8e3f8"/>
         <path d="M565 900 L580 910 L578 935 L566 925z" fill="#86d9ee"/>
         <g fill="#caf0d8"><path d="M60 700 L100 820 L60 860z M180 720 L280 800 L240 900z M300 130 L340 230 L290 280z M540 250 L570 300 L540 310z M120 960 L200 980 L150 1100z M640 900 L780 920 L720 1010z M780 820 L810 870 L800 930z M400 1100 L480 1140 L420 1200z"/></g>
         <g fill="#dffae9"><path d="M40 1080 L140 1110 L60 1200z M200 280 L270 250 L230 330z M480 100 L560 80 L540 220z M640 1040 L720 1030 L690 1140z M280 950 L320 1010 L300 1060z M90 640 L160 650 L110 720z"/></g>
         <g class="rd thin"><path d="M820 350 L880 280 L960 210 L1040 60"/><path d="M900 250 L1000 230 L1080 190 L1120 60"/><path d="M940 320 L1060 320 L1180 260 L1390 230"/><path d="M860 330 L1000 370 L1080 410"/><path d="M1050 240 L1150 250 L1180 130 L1290 50"/><path d="M970 400 L1000 470 L980 580 L1010 640"/><path d="M1140 430 L1200 400 L1300 380"/><path d="M1080 190 L1130 240 L1160 330"/><path d="M1240 70 L1260 200 L1200 300"/><path d="M1280 290 L1260 340 L1290 380"/><path d="M900 450 L820 490 L720 470 L690 350"/><path d="M860 560 L920 640 L1000 640"/><path d="M1120 720 L1120 860 L1160 980 L1210 1140 L1220 1230"/><path d="M1140 710 L1230 730 L1270 820 L1330 910"/><path d="M1360 860 L1430 900 L1560 900"/><path d="M1340 1090 L1440 1100 L1560 1190"/><path d="M1130 560 L1240 470 L1300 440"/><path d="M1310 680 L1370 740 L1480 700"/><path d="M1470 820 L1560 860"/><path d="M1500 1050 L1490 1200 L1560 1130"/><path d="M1350 1080 L1360 1220"/><path d="M870 160 L910 200 L940 320"/><path d="M1010 120 L1030 210"/></g>
         <g class="rd gthin"><path d="M400 40 L450 110 L520 155 L610 170 L660 130"/><path d="M200 50 L240 75 L330 45"/><path d="M500 620 L480 680 L490 780 L520 830 L525 730"/><path d="M160 860 L220 860 L210 930 L190 880 L140 940"/><path d="M420 640 L320 640 L250 720 L250 800"/><path d="M690 900 L700 850 L780 810"/><path d="M580 1150 L600 1100 L560 1040"/><path d="M850 640 L840 720"/></g>
         <g class="rd bdr"><path d="M1200 50 L1195 300 L1210 380 L1140 440 L1100 540 L1100 620 L1060 740 L1020 730 L990 870 L950 860 L940 950 L870 1040 L830 1000 L700 1025 L640 1080 L580 1130 L530 1150 L470 1120 L380 1030"/><path d="M1080 700 L1120 635 L1170 660 L1200 660 L1220 700 L1270 690 L1310 735 L1360 700 L1440 700 L1480 735 L1530 730 L1570 690"/><path d="M30 1090 L100 1085 L150 1070 L170 1105 L200 1040 L240 1035 L280 1000 L310 1005 L370 1055 L385 1025"/></g>
         <g class="rd w5"><path d="M135 40 L160 140 L190 180 L205 280 L255 350 L262 405 L312 415 L350 380 L380 355"/><path d="M380 300 L400 240 L430 230"/><path d="M412 40 L420 140 L430 230"/><path d="M472 40 L440 120 L430 230"/><path d="M665 45 L690 120 L700 140 L740 150 L765 178 L810 150 L850 170 L880 150"/><path d="M905 45 L895 90 L870 140"/><path d="M900 240 L915 310 L960 280"/><path d="M1015 225 L1040 210 L1045 240"/><path d="M312 510 L330 565 L380 535 L410 540"/><path d="M640 385 L620 440"/><path d="M580 500 L580 570 L602 585 L602 700"/><path d="M1375 45 L1390 110 L1405 240 L1430 360 L1450 360 L1470 300"/><path d="M1423 45 L1410 110 L1397 170"/><path d="M1540 45 L1540 110 L1510 190 L1510 235 L1570 200"/><path d="M1480 400 L1560 380"/><path d="M1450 450 L1460 560 L1440 640 L1445 720"/><path d="M1445 455 Q1500 460 1503 500"/><path d="M1240 575 L1300 465 L1370 475 L1385 450"/><path d="M1510 640 L1470 690 L1360 670"/><path d="M1085 440 L1095 540 L1130 575 L1250 575"/><path d="M1050 600 L1140 582"/><path d="M1082 600 L1085 720 L1110 830 L1130 920 L1130 980"/><path d="M950 690 L1000 660 L1045 650"/><path d="M925 1230 L915 1150 L918 995 L990 965"/><path d="M918 1055 L960 1065 L985 1020 L1040 1050 L1075 990 L1200 1000 L1240 975 L1280 990 L1290 1020 L1350 1030 L1380 980"/><path d="M1430 990 L1430 890 L1480 880 L1505 920 L1505 1000"/></g>
         <g class="rd w6"><path d="M430 230 Q440 265 480 260 L540 245 L562 290 L570 330 L600 405"/><path d="M780 425 L900 455 L960 440 L1000 405 L1100 405"/><path d="M1030 295 L1060 385"/><path d="M1045 290 L1085 390"/><path d="M1205 410 L1240 560 L1270 600 L1330 640 L1440 790 L1465 880"/><path d="M1270 555 L1300 575 L1350 660 L1440 700 L1460 740 L1450 810"/><path d="M1465 1100 L1480 1180 L1510 1197 H1580"/></g>
         <g class="rd w8"><path d="M30 585 L75 580"/><path d="M80 650 L115 675 L160 630 L230 630 L265 590 L400 590 L425 640 L450 580 L490 530 L505 560 L525 510 L560 440 L600 405 L640 380 L665 375 L720 320 L765 295 L820 330"/><path d="M860 300 L920 295 L960 275"/><path d="M690 355 L780 425"/><path d="M1100 405 L1180 350 L1230 375 L1300 395 L1360 430"/><path d="M1100 390 L1200 380"/><path d="M30 1035 L70 1045 L130 1010 M175 985 L188 1010 L200 970 L235 970 L260 910 L330 910 L395 880 L415 845 L425 760 L440 725 L480 725 L520 705 L560 720 L670 705 L720 720 L760 710 L810 720 L865 705 L880 770 L910 825 L945 850 L995 965 L1060 950 L1130 885 L1180 865 L1270 865 L1330 930 L1375 970 L1440 970 L1500 975 L1580 965"/><path d="M1465 880 L1490 810 L1520 795 L1580 820"/></g>
        </g>
        <!-- eastern half -->
        <g transform="matrix(.7526 0 0 .3333 1080 -14)">
         <path fill="#f6f7f8" d="M-20 40 H40 L80 130 L110 65 L130 95 L145 65 L170 115 L178 80 L215 160 L250 80 L290 190 L232 210 L235 280 L265 320 L285 300 L265 465 L335 512 L350 465 L415 540 L460 622 L390 590 L368 600 L366 660 L345 700 L380 805 L335 790 L295 865 L375 905 L400 925 L435 1045 L410 1135 L430 1260 H-20z M272 225 L290 245 L272 280z M322 300 L320 345 L290 360z M645 985 L695 905 L690 1090 L650 1075z M690 1090 L720 1140 L735 1260 L725 1130z M1052 1025 L1075 1070 L1055 1120z M1140 1110 L1170 1085 L1155 1145z M1390 910 L1412 975 L1398 980z"/>
         <ellipse cx="1231" cy="240" rx="70" ry="162" fill="#bbead0"/>
         <path fill="#caf0da" d="M1310 60 L1440 100 L1440 560 L1390 480 L1290 400z M1010 100 L1060 60 L1030 280 L1005 240z M940 840 L1010 800 L1050 960 L900 1010z M560 600 L640 620 L600 650 L540 640z M1100 620 L1200 680 L1180 1000 L1080 800z M1260 780 L1310 900 L1260 1060z M690 760 L740 800 L670 850z"/>
         <path fill="#bfe5cf" d="M1000 150 L1050 90 L1000 250 L965 270z M770 370 L800 300 L790 400z M575 495 L608 490 L607 525z M775 470 L795 430 L785 520z M945 380 L958 340 L950 470z"/>
         <path fill="#e3f8e0" d="M1100 95 L1140 90 L1120 300 L1080 330 L1060 280z M1020 340 L1028 330 L1010 520 L1000 500z M1290 210 L1350 110 L1360 120 L1310 220z M740 380 L765 440 L740 470z M880 390 L910 520 L890 540z M1060 560 L1100 490 L1090 560 L1060 590z M945 150 L965 70 L960 100z M345 650 L360 680 L345 690z"/>
         <path fill="#def9e9" d="M590 350 L640 280 L620 390z M810 280 L870 270 L840 420z M520 430 L570 430 L550 465z M650 580 L690 540 L685 600z M700 420 L730 460 L700 460z M800 560 L850 600 L800 640z"/>
         <path fill="#c0efd2" d="M272 905 L285 888 L298 905 L290 925 L275 922z"/>
         <g class="rd thin"><path d="M195 680 L240 620 L285 610 L300 570 L355 575 L400 545 L440 560"/><path d="M240 700 L285 615"/><path d="M-20 750 L80 720 L130 740 L230 735 L250 700 L320 690 L400 680 L470 700 L510 750 L560 730 L585 750"/><path d="M0 900 L100 850 L200 830 L300 820 L350 750"/><path d="M80 880 L150 960 L260 900 L330 930 L400 930"/><path d="M20 980 L90 900 L200 960 L220 1060 L330 1010"/><path d="M-10 1120 L60 1150 L160 1110 L300 1200 L420 1180"/><path d="M100 740 L120 900"/><path d="M60 1060 L30 1200"/><path d="M405 1040 L380 1200"/><path d="M130 760 L90 860"/><path d="M200 800 L260 850 L250 930"/><path d="M160 1140 L260 1110 L300 1060"/><path d="M220 1000 L180 920"/></g>
         <g class="rd gthin"><path d="M570 125 L590 130 L595 65 L615 140" stroke="#a5b8d0"/><path d="M540 190 L545 215 L525 205 L505 330 L480 355 L483 400 L475 530 L435 570 L415 548" stroke="#a5b8d0"/><path d="M585 850 L590 910 L615 925 L635 890 L665 930 L700 1050 L710 1110 L770 1190"/><path d="M665 950 L650 1050 L655 1230"/><path d="M920 610 L945 590 L975 605 L990 640 L1000 615 L995 670 L975 730"/><path d="M915 790 L910 850 L890 820 L840 880 L840 930 L825 980 L830 1000 L795 990 L770 1060"/></g>
         <g class="rd bdr"><path d="M275 45 L283 130 L270 210 L233 280 L228 470 L185 490 L145 580 L120 620 L100 670 L70 690 L0 670"/><path d="M788 45 L805 110 L798 220 L830 330 L832 480 L863 570 L865 655 L815 670 L770 660 L740 685 L710 680 L690 740 L665 750 L640 830 L600 830 L585 790 L550 790 L500 810 L490 850 L460 840 L440 905 L290 925 L302 1010 L295 1100 L260 1230"/><path d="M1380 50 L1440 68"/></g>
         <g class="rd w5"><path d="M-10 190 L15 190 L40 140 L88 135 L105 245 L150 250 L185 225 L190 185 L225 165"/><path d="M100 250 L98 285 L75 300 L72 345 L50 370 L20 365"/><path d="M1365 700 L1405 740 L1410 770 L1440 820"/><path d="M1305 710 L1290 755 L1250 742 L1205 800 L1185 920 L1180 1020 L1165 1075 L1145 1105 L1118 1085 L1120 1120 L1090 1140"/><path d="M1045 1190 L1020 1240"/><path d="M180 1100 L205 1175"/></g>
         <g class="rd w6"><path d="M310 45 L312 130 L240 140 L220 200 L185 440 L150 510 L135 575 L50 630 L38 660 L40 830"/><path d="M30 860 L22 960"/><path d="M85 1105 L180 1150 L185 1180 Q240 1160 275 1240"/><path d="M185 1180 Q160 1200 160 1240"/><path d="M-10 1190 L40 1160 L90 1110"/><path d="M170 1080 L210 1180"/></g>
         <g class="rd w8"><path d="M-10 825 L50 850 L80 875 L90 920 L110 940 L108 990 M-30 975 L60 980 L150 1010"/></g>
         <path d="M435 1240 L450 1215 L465 1240z M1160 1240 L1173 1210 L1185 1240z" fill="#a2b4d9"/>
        </g>
        <path d="M0 211 H2160" stroke="#fff" stroke-opacity=".8" stroke-width="1"/>
        <g transform="translate(-620 -1404)" id="labels">
         <g class="lbl">
          <text x="773" y="1470">San José</text><text x="773" y="1494">de Alajuela</text><text x="719" y="1557">San Isidro</text><text x="835" y="1594">Atenas</text><text x="1006" y="1554">La Garita</text><text x="1179" y="1532" style="font-size:19px;letter-spacing:1px">EL COYOL</text><text x="1318" y="1484">Alajuela</text><text x="1655" y="1489">San Rafael</text><text x="1593" y="1538">Heredia</text><text x="1676" y="1575">Santo</text><text x="1677" y="1600">Domingo</text><text x="1172" y="1654">Guácima</text><text x="677" y="1723">Escobal</text>
          <text x="1012" y="1719" class="prov">ALAJUELA PROVINCE</text><text x="1012" y="1798" class="prov">SAN JOSÉ PROVINCE</text>
          <text x="1239" y="1784">Ciudad Colón</text><text x="1412" y="1736">Santa Ana</text><text x="658" y="1799">San Pablo</text><text x="1921" y="1644">Purral</text><text x="2293" y="1758">Potrero</text><text x="2293" y="1783">Cerrado</text><text x="2499" y="1782">Pacayas</text><text x="2786" y="1690">Vereh</text><text x="1978" y="1808">Tres Ríos</text>
          <text transform="translate(2699 1416) rotate(28)" class="prov" style="text-anchor:start">PROVINCE</text>
          <text x="1678" y="1753" style="font-size:52px;font-weight:500;fill:#202124">San José</text>
         </g>
         <circle cx="2687" cy="1403" r="6" fill="#3c4043"/>
        </g>
       </svg>
       <div class="zoomer"><button type="button" aria-label="Acercar">+</button><button type="button" aria-label="Alejar">−</button></div>
      </div>
     </div>
    </div>
   </form>
  </main>
 </div>
</div>
<script src="https://cdn.jsdelivr.net/npm/bootstrap@5.3.0/dist/js/bootstrap.bundle.min.js"></script>
<script>
// Route numbers: [number, x, y]; the second list uses the national-route shield.
const round=[[717,1051,1453],[118,1217,1453],[716,864,1507],[135,819,1546],[123,1491,1467],[128,1545,1455],[129,1389,1555],[124,1189,1577],[122,1334,1595],[124,1263,1619],[707,759,1663],[136,1007,1668],[121,1329,1736],[3,827,1393],[134,610,1443],[131,608,1553],[116,1732,1445],[112,1702,1515],[216,2109,1435],[218,1839,1635],[218,2138,1657],[202,1830,1689],[306,1895,1717],[202,2009,1719],[219,2410,1641],[230,2705,1619],[211,1758,1784]];
const shield=[[1,958,1470],[3,1191,1494],[3,1442,1510],[3,899,1578],[3,653,1592],[27,1007,1631],[27,810,1696],[1,1494,1594],[27,1443,1691],[32,1735,1652],[2,1823,1738]];
let s='';
for(const [n,x,y] of round)s+=`<rect x="${x-20}" y="${y-16}" width="40" height="32" rx="15" fill="#fff" stroke="#5f6368" stroke-width="2"/><text class="num" x="${x}" y="${y+7}">${n}</text>`;
for(const [n,x,y] of shield)s+=`<use href="#us" x="${x-18}" y="${y-18}" width="36" height="36"/><text class="num" x="${x}" y="${y+6}">${n}</text>`;
document.getElementById('labels').insertAdjacentHTML('beforeend',s);
</script>
</body>
</html>
